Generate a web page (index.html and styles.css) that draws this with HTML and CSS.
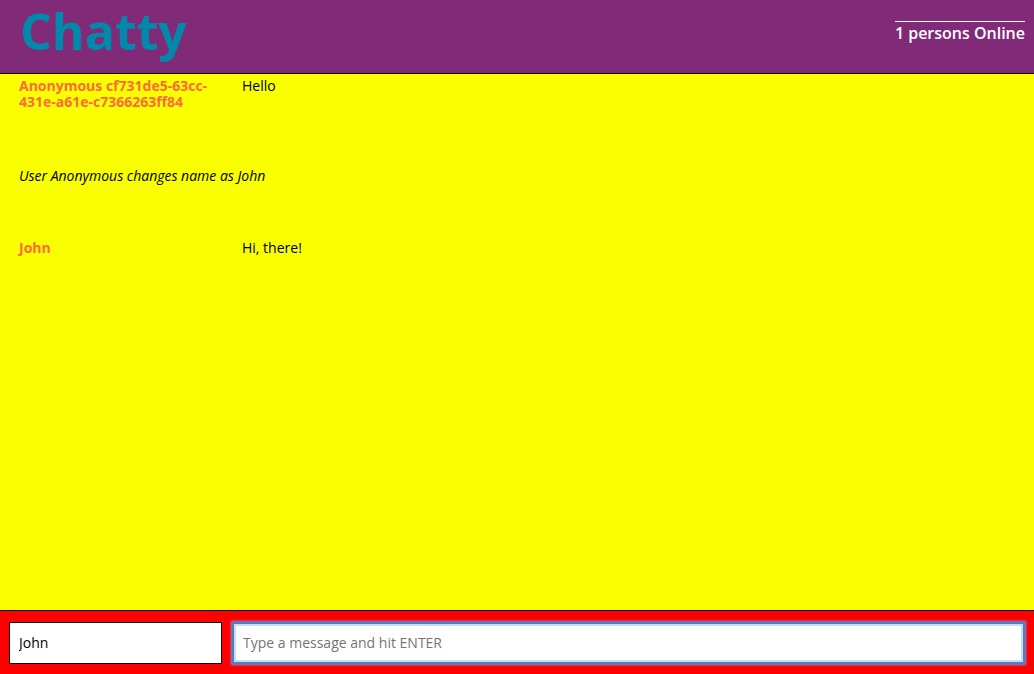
FILE: index.html
```html
<!DOCTYPE html>
<html>
<head>
<meta charset="utf-8">
<title>Chatty</title>
<link rel="stylesheet" href="styles.css">
</head>
<body>
<div class="app">
  <header class="navbar">
    <h1 class="brand">Chatty</h1>
    <div class="online">1 persons Online</div>
  </header>
  <main class="messages">
    <div class="message">
      <span class="username">Anonymous cf731de5-63cc-431e-a61e-c7366263ff84</span>
      <span class="content">Hello</span>
    </div>
    <div class="message system">User Anonymous changes name as John</div>
    <div class="message">
      <span class="username">John</span>
      <span class="content">Hi, there!</span>
    </div>
  </main>
  <footer class="chatbar">
    <input class="name-input" type="text" value="John">
    <input class="msg-input" type="text" placeholder="Type a message and hit ENTER" autofocus>
  </footer>
</div>
</body>
</html>
```
FILE: styles.css
```css
* { box-sizing: border-box; }
html, body { margin: 0; padding: 0; height: 100%; }
body { font-family: "Open Sans", "DejaVu Sans", sans-serif; font-size: 14px; }
.app { display: flex; flex-direction: column; height: 100vh; }
.navbar {
  height: 74px;
  background: #812a77;
  border-bottom: 1px solid #000;
  display: flex;
  justify-content: space-between;
  align-items: flex-start;
  padding: 0 9px 0 20px;
  flex: none;
}
.brand {
  margin: 0;
  font-size: 50px;
  font-weight: 700;
  color: #0089aa;
  line-height: 70px;
  margin-top: -4px;
}
.online {
  margin-top: 21px;
  border-top: 1px solid #fff;
  color: #fff;
  font-size: 16px;
  font-weight: 600;
  line-height: 22px;
}
.messages {
  flex: 1;
  background: #f9ff00;
  padding-top: 4px;
  overflow: hidden;
}
.message {
  display: flex;
  padding-left: 19px;
  margin-bottom: 56px;
  line-height: 16px;
}
.message.system { padding-top: 2px; }
.username {
  width: 200px;
  flex: none;
  color: #ff6a3c;
  font-weight: 700;
  margin-right: 23px;
}
.content { color: #000; }
.system { font-style: italic; color: #000; }
.chatbar {
  flex: none;
  height: 64px;
  background: #ff0000;
  border-top: 1px solid #000;
  display: flex;
  gap: 10px;
  padding: 11px 9px 10px 9px;
}
.chatbar input {
  font-family: "Open Sans", "DejaVu Sans", sans-serif;
  font-size: 14px;
  height: 42px;
  border: 1px solid #000;
  background: #fff;
  color: #000;
  outline: none;
  margin: 0;
  padding-bottom: 2px;
}
.name-input { width: 213px; padding: 0 9px; }
.msg-input {
  flex: 1;
  padding: 0 9px;
  border: 2px solid #4d7fc8 !important;
  box-shadow: inset 0 0 0 2px #c5dcf5, 0 0 2px 1px #6a9be0;
}
.msg-input::placeholder { color: #757575; }
```
